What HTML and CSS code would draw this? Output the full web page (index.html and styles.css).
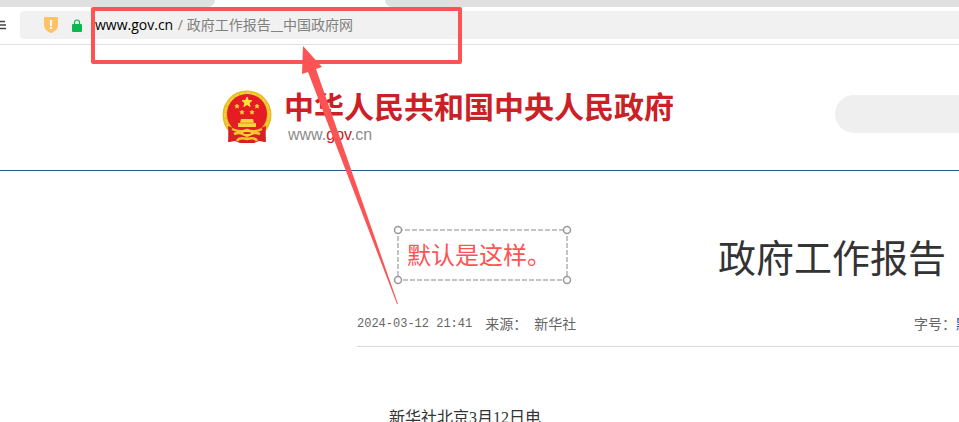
FILE: index.html
```html
<!DOCTYPE html>
<html lang="zh-CN">
<head>
  <meta charset="UTF-8">
  <meta name="viewport" content="width=device-width, initial-scale=1.0">
  <title>政府工作报告__中国政府网</title>
  <link rel="stylesheet" href="styles.css">
</head>
<body>

  <div class="tabs">
    <div class="tab tab-left"></div>
    <div class="tab tab-right"></div>
  </div>

  <div class="toolbar">
    <svg class="menu-icon" width="6" height="10" viewBox="0 0 6 10">
      <path d="M0 1.500h5M0 5h6M0 8.500h6" fill="none" stroke="#444" stroke-width="1.500"/>
    </svg>
    <div class="address">
      <svg width="14" height="16" viewBox="0 0 14 16">
        <path d="M1 0h12q1 0 1 1v7c0 4-3 6.500-7 8c-4-1.500-7-4-7-8V1q0-1 1-1z" fill="#ffc266"/>
        <path d="M6 3h2v6H6zM6 10h2v2H6z" fill="#fff"/>
      </svg>
      <svg class="lock" width="10" height="13" viewBox="0 0 10 13">
        <path d="M2.500 6V3.500a2.500 2.500 0 0 1 5 0V6" fill="none" stroke="#0bb850" stroke-width="1.200"/>
        <rect y="5" width="10" height="8" rx="1" fill="#0bb850"/>
      </svg>
      <p class="url"><span class="host">www.gov.cn</span> / 政府工作报告__中国政府网</p>
    </div>
  </div>

  <header class="header">
    <svg class="emblem" width="50" height="54" viewBox="0 0 50 54">
      <path d="M7 37L6 52l7-1 5 2h14l5-2 7 1-1-15z" fill="#d91f26"/>
      <circle cx="25" cy="25" r="24.500" fill="#e8b923"/>
      <circle cx="25" cy="25" r="22" fill="none" stroke="#f3d03a" stroke-width="2" stroke-dasharray="5 1"/>
      <circle cx="25" cy="24" r="20" fill="#e51c23"/>
      <path d="M25 7l1.300 3.400 3.700.2-2.900 2.300 1 3.600-3.100-2-3.100 2 1-3.600-2.900-2.300 3.700-.2z" fill="#ffe13b" stroke="#ffe13b"/>
      <path id="star" d="M15 14l.6 1.500 1.600.1-1.200 1 .4 1.600-1.400-.9-1.400.9.4-1.600-1.200-1 1.600-.1z" fill="#ffe13b" stroke="#ffe13b" stroke-width=".5"/>
      <use href="#star" x="20"/>
      <use href="#star" x="5" y="6"/>
      <use href="#star" x="15" y="6"/>
      <path d="M19 29h12l1 4h2v4H16v-4h2z" fill="#f5d33a"/>
      <path d="M18 33h14" stroke="#e0981f"/>
      <path d="M6 36l10 4 9-2 9 2 10-4-1 16-7-2-5 3H19l-5-3-7 2z" fill="#d91f26"/>
      <path d="M10 39q8 4 15 1q7 3 15-1M12 44q7-3 13 2q6-5 13-2M15 51q2-4 10-2q8-2 10 2" fill="none" stroke="#f2c52e" stroke-width="2.500"/>
      <ellipse cx="25" cy="43" rx="5" ry="2" fill="#e51c23" stroke="#f5d33a" stroke-width="2"/>
    </svg>
    <div class="brand">
      <a class="brand-name" href="#">中华人民共和国中央人民政府</a>
      <p class="brand-url">www.<span class="red">gov</span>.cn</p>
    </div>
    <input class="search" type="search" aria-label="搜索">
  </header>

  <article class="article">
    <h1 class="title">政府工作报告</h1>
    <div class="meta">
      <time>2024-03-12 21:41</time>
      <span class="source">来源：</span>
      <span>新华社</span>
      <div class="font-size">字号：<a href="#">默认</a></div>
    </div>
    <p class="text">新华社北京3月12日电</p>
  </article>

  <!-- marks drawn over the page -->
  <div class="mark-box"></div>
  <svg class="mark-arrow" width="100" height="260" viewBox="0 0 100 260">
    <path d="M4 1L23 22L17 24L99 259L98 259L9 27L3 29z" fill="#fc5454"/>
  </svg>
  <div class="note">
    <svg class="note-frame" width="180" height="60" viewBox="0 0 180 60">
      <rect x="5" y="5" width="169" height="50" fill="none" stroke="#c4c4c4" stroke-width="2" stroke-dasharray="5 2"/>
      <g fill="#fff" stroke="#999" stroke-width="1.500">
        <circle cx="5" cy="5" r="3.500"/>
        <circle cx="174" cy="5" r="3.500"/>
        <circle cx="5" cy="55" r="3.500"/>
        <circle cx="174" cy="55" r="3.500"/>
      </g>
    </svg>
    <p>默认是这样。</p>
  </div>

</body>
</html>
```

FILE: styles.css
```css
* {
  box-sizing: border-box;
}
body {
  margin: 0;
  background-color: white;
  font-family: "Open Sans", "Noto Sans CJK SC", sans-serif;
  overflow: hidden;
}
p {
  margin: 0;
}
a {
  text-decoration: none;
}

.tabs {
  display: flex;
  justify-content: space-between;
  gap: 170px;
  height: 7px;
}
.tab {
  background-color: #e0e0e0;
}
.tab-left {
  width: 215px;
  border-bottom-right-radius: 8px;
}
.tab-right {
  flex: 1;
  border-bottom-left-radius: 8px;
}

.toolbar {
  display: flex;
  align-items: center;
  gap: 14px;
  height: 38px;
  padding-bottom: 1px;
  border-bottom: 1px solid #e0e0e0;
}
.address {
  flex: 1;
  display: flex;
  align-items: center;
  height: 28px;
  padding-left: 24px;
  border-radius: 4px 0 0 4px;
  background-color: #f1f1f1;
}
.lock {
  margin: 0 13px 0 14px;
}
.url {
  font-size: 14px;
  line-height: 28px;
  color: #808080;
  white-space: nowrap;
}
.host {
  margin-right: 1px;
  color: black;
}

.header {
  display: flex;
  align-items: center;
  height: 126px;
  padding-left: 222px;
  border-bottom: 1px solid #28568f;
}
.emblem {
  flex: none;
  margin-top: 18px;
}
.brand {
  flex: none;
  margin: 18px 161px 0 12px;
}
.brand-name {
  display: block;
  font-size: 30px;
  line-height: 36px;
  font-weight: bold;
  color: #cc2027;
}
.brand-url {
  padding-left: 4px;
  font-family: "Liberation Sans", sans-serif;
  font-size: 16px;
  line-height: 20px;
  color: #8c8c8c;
}
.red {
  color: #cc2027;
}
.search {
  flex: 1;
  min-width: 0;
  height: 38px;
  margin-top: 12px;
  padding: 0 20px;
  border: none;
  border-radius: 19px 0 0 19px;
  background-color: #efefef;
}

.article {
  margin-left: 357px;
}
.title {
  margin: 0;
  padding: 56px 13px 0 0;
  font-size: 38px;
  line-height: 60px;
  font-weight: normal;
  text-align: right;
  color: #333;
}
.meta {
  display: flex;
  height: 60px;
  padding-top: 26px;
  border-bottom: 1px solid #d9d9d9;
  font-size: 14px;
  line-height: 22px;
  color: #666;
  white-space: nowrap;
}
.meta time {
  font-family: "Liberation Mono", monospace;
  font-size: 12px;
}
.source {
  margin: 0 7px 0 13px;
}
.font-size {
  width: 45px;
  margin-left: auto;
}
.font-size a {
  color: #004f98;
}
.text {
  padding: 59px 0 0 32px;
  font-family: "Liberation Serif", "Noto Sans CJK SC", serif;
  font-size: 16px;
  line-height: 24px;
  color: #333;
}

.mark-box {
  position: absolute;
  left: 91px;
  top: 7px;
  width: 371px;
  height: 57px;
  border: 4px solid #fc5454;
  border-radius: 2px;
}
.mark-arrow {
  position: absolute;
  left: 299px;
  top: 45px;
}
.note {
  position: absolute;
  left: 393px;
  top: 225px;
  padding: 12px 14px;
  font-size: 24px;
  line-height: 36px;
  color: #fc5454;
}
.note-frame {
  position: absolute;
  left: 0;
  top: 0;
}
```
